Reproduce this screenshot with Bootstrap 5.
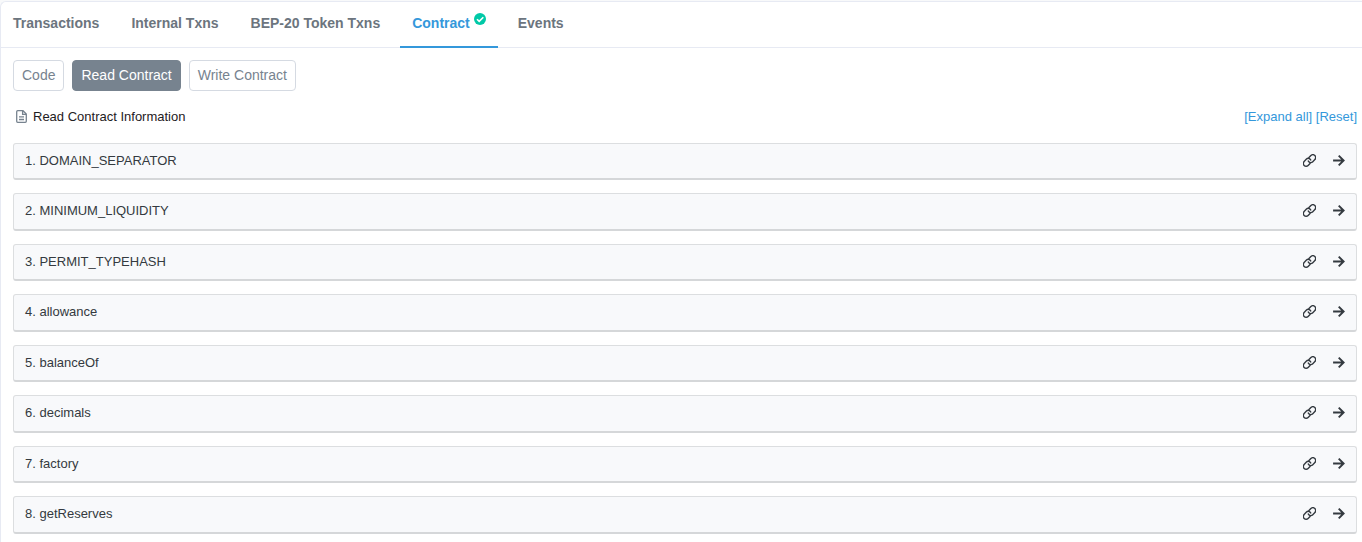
<!DOCTYPE html>
<html lang="en">
<head>
<meta charset="utf-8">
<meta name="viewport" content="width=device-width, initial-scale=1">
<title>Read Contract</title>
<link href="https://cdn.jsdelivr.net/npm/bootstrap@5.3.0/dist/css/bootstrap.min.css" rel="stylesheet">
<style>
body { font-family: "Liberation Sans", Arial, sans-serif; font-size: 13px; line-height: 1.5; color: #1e2022; background: #f8f9fa; }
a { color: #3498db; text-decoration: none; }
.panel { background: #fff; border: solid #e7eaf3; border-width: 1px 0 0 1px; border-top-left-radius: 6px; margin-top: 1px; min-height: calc(100vh - 1px); }
.tabs { border-bottom: 1px solid #e7eaf3; gap: 8px; }
.tabs .nav-link { padding: 11px 12px 13px; margin-bottom: -1px; font-size: 14px; font-weight: 700; line-height: 20px; color: #6c757e; border-bottom: 2px solid transparent; }
.tabs .nav-link.active { color: #3498db; border-color: #3498db; }
.check { width: 12px; height: 12px; margin: 0 0 8px 4px; }
.content { padding: 12px 5px 8px 12px; }
.modes { gap: 8px; }
.modes .btn { --bs-btn-padding-x: 8px; --bs-btn-padding-y: 4px; --bs-btn-font-size: 14px; --bs-btn-border-radius: 4px; --bs-btn-color: #77838f; --bs-btn-border-color: #d5dae2; --bs-btn-active-bg: #77838f; --bs-btn-active-border-color: #77838f; --bs-btn-active-color: #fff; line-height: 21px; }
.info { margin: 16px 0; }
.doc { width: 11px; height: 13px; margin: 0 6px 0 3px; }
.methods { gap: 13px; }
.method { padding: 7px 11px 8px; background: #f8f9fb; border: 1px solid #dcdee0; border-bottom: 2px solid #d5d7d9; border-radius: 3px; }
.method a { color: #343a40; }
.actions { gap: 16px; }
.glyph { width: 13px; height: 13px; display: block; fill: none; stroke: currentColor; }
</style>
</head>
<body>
<svg class="d-none">
<symbol id="link" viewBox="0 0 12 12"><g transform="rotate(-45 6 6)" stroke-width="1.300"><path d="M5 8.300H1.900a2.600 2.600 0 0 1-2.600-2.600v0a2.600 2.600 0 0 1 2.600-2.600h2.700a2.600 2.600 0 0 1 2.600 2.600c0 .5-.1.900-.3 1.200"/><path d="M7 3.700h3.100a2.600 2.600 0 0 1 2.600 2.600v0a2.600 2.600 0 0 1-2.600 2.600H7.400a2.600 2.600 0 0 1-2.600-2.600c0-.5.1-.9.300-1.200"/></g></symbol>
<symbol id="arrow" viewBox="0 0 12 12"><path d="M1 6h9.500M6.200 1.500L10.700 6l-4.500 4.500" stroke-width="1.800"/></symbol>
</svg>
<main class="panel">
<ul class="nav tabs">
<li class="nav-item"><a class="nav-link" href="#">Transactions</a></li>
<li class="nav-item"><a class="nav-link" href="#">Internal Txns</a></li>
<li class="nav-item"><a class="nav-link" href="#">BEP-20 Token Txns</a></li>
<li class="nav-item"><a class="nav-link active d-flex align-items-center" href="#" aria-current="page">Contract<svg class="check" viewBox="0 0 12 12" aria-label="Verified"><circle cx="6" cy="6" r="6" fill="#00c9a7"/><path d="M3 6.200l2.200 2.200L9.300 4.200" fill="none" stroke="#fff" stroke-width="1.600"/></svg></a></li>
<li class="nav-item"><a class="nav-link" href="#">Events</a></li>
</ul>
<div class="content">
<div class="modes d-flex flex-wrap">
<button type="button" class="btn">Code</button>
<button type="button" class="btn active">Read Contract</button>
<button type="button" class="btn">Write Contract</button>
</div>
<div class="info d-flex justify-content-between">
<div class="d-flex align-items-center"><svg class="doc" viewBox="0 0 11 13" fill="none" stroke="#77838f" stroke-width="1.300" aria-hidden="true"><path d="M1.700.7H7L10.300 4v7.300q0 1-1 1H1.700q-1 0-1-1V1.700q0-1 1-1zM6.600.8V4.300h3.600M3 6.800h5M3 9.500h5"/></svg>Read Contract Information</div>
<div><a href="#">[Expand all]</a> <a href="#">[Reset]</a></div>
</div>
<div class="methods d-flex flex-column">
<div class="method d-flex justify-content-between align-items-center"><a href="#">1. DOMAIN_SEPARATOR</a><div class="actions d-flex"><a href="#" aria-label="Copy link"><svg class="glyph"><use href="#link"/></svg></a><a href="#" aria-label="Open"><svg class="glyph"><use href="#arrow"/></svg></a></div></div>
<div class="method d-flex justify-content-between align-items-center"><a href="#">2. MINIMUM_LIQUIDITY</a><div class="actions d-flex"><a href="#" aria-label="Copy link"><svg class="glyph"><use href="#link"/></svg></a><a href="#" aria-label="Open"><svg class="glyph"><use href="#arrow"/></svg></a></div></div>
<div class="method d-flex justify-content-between align-items-center"><a href="#">3. PERMIT_TYPEHASH</a><div class="actions d-flex"><a href="#" aria-label="Copy link"><svg class="glyph"><use href="#link"/></svg></a><a href="#" aria-label="Open"><svg class="glyph"><use href="#arrow"/></svg></a></div></div>
<div class="method d-flex justify-content-between align-items-center"><a href="#">4. allowance</a><div class="actions d-flex"><a href="#" aria-label="Copy link"><svg class="glyph"><use href="#link"/></svg></a><a href="#" aria-label="Open"><svg class="glyph"><use href="#arrow"/></svg></a></div></div>
<div class="method d-flex justify-content-between align-items-center"><a href="#">5. balanceOf</a><div class="actions d-flex"><a href="#" aria-label="Copy link"><svg class="glyph"><use href="#link"/></svg></a><a href="#" aria-label="Open"><svg class="glyph"><use href="#arrow"/></svg></a></div></div>
<div class="method d-flex justify-content-between align-items-center"><a href="#">6. decimals</a><div class="actions d-flex"><a href="#" aria-label="Copy link"><svg class="glyph"><use href="#link"/></svg></a><a href="#" aria-label="Open"><svg class="glyph"><use href="#arrow"/></svg></a></div></div>
<div class="method d-flex justify-content-between align-items-center"><a href="#">7. factory</a><div class="actions d-flex"><a href="#" aria-label="Copy link"><svg class="glyph"><use href="#link"/></svg></a><a href="#" aria-label="Open"><svg class="glyph"><use href="#arrow"/></svg></a></div></div>
<div class="method d-flex justify-content-between align-items-center"><a href="#">8. getReserves</a><div class="actions d-flex"><a href="#" aria-label="Copy link"><svg class="glyph"><use href="#link"/></svg></a><a href="#" aria-label="Open"><svg class="glyph"><use href="#arrow"/></svg></a></div></div>
</div>
</div>
</main>
<script src="https://cdn.jsdelivr.net/npm/bootstrap@5.3.0/dist/js/bootstrap.bundle.min.js"></script>
</body>
</html>
